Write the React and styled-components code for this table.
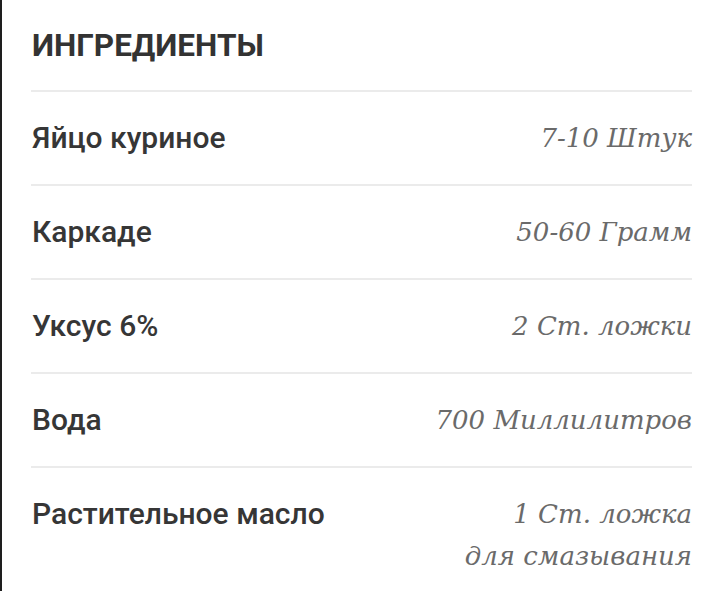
import React from "react";
import styled, { createGlobalStyle } from "styled-components";

const GlobalStyle = createGlobalStyle`
  html, body {
    margin: 0;
    padding: 0;
    background: #ffffff;
  }
`;

const Panel = styled.section`
  box-sizing: border-box;
  width: 721px;
  height: 591px;
  overflow: hidden;
  border-left: 2px solid #1e1e1e;
  padding: 0 29px 0 29px;
  background: #ffffff;
`;

const Title = styled.h2`
  margin: 0;
  height: 90px;
  display: flex;
  align-items: center;
  padding-left: 1px;
  font-family: Roboto, "Liberation Sans", sans-serif;
  font-weight: 700;
  font-size: 31.5px;
  color: #333333;
`;

const List = styled.ul`
  margin: 0;
  padding: 0;
  list-style: none;
`;

const Row = styled.li`
  display: flex;
  justify-content: space-between;
  align-items: flex-start;
  border-top: 2px solid #ebebeb;
  padding: 25px 0 25px 1px;
  line-height: 42px;
`;

const Name = styled.span`
  font-family: Roboto, "Liberation Sans", sans-serif;
  font-weight: 500;
  font-size: 30px;
  color: #363636;
`;

const Amount = styled.span`
  font-family: "DejaVu Serif", serif;
  font-style: italic;
  font-size: 26px;
  color: #6a6a6a;
  text-align: right;
`;

const ingredients = [
  { name: "Яйцо куриное", amount: ["7-10 Штук"] },
  { name: "Каркаде", amount: ["50-60 Грамм"] },
  { name: "Уксус 6%", amount: ["2 Ст. ложки"] },
  { name: "Вода", amount: ["700 Миллилитров"] },
  { name: "Растительное масло", amount: ["1 Ст. ложка", "для смазывания"] },
];

export default function App() {
  return (
    <>
      <GlobalStyle />
      <Panel>
        <Title>ИНГРЕДИЕНТЫ</Title>
        <List>
          {ingredients.map((item) => (
            <Row key={item.name}>
              <Name>{item.name}</Name>
              <Amount>
                {item.amount.map((line, i) => (
                  <React.Fragment key={i}>
                    {i > 0 && <br />}
                    {line}
                  </React.Fragment>
                ))}
              </Amount>
            </Row>
          ))}
        </List>
      </Panel>
    </>
  );
}
